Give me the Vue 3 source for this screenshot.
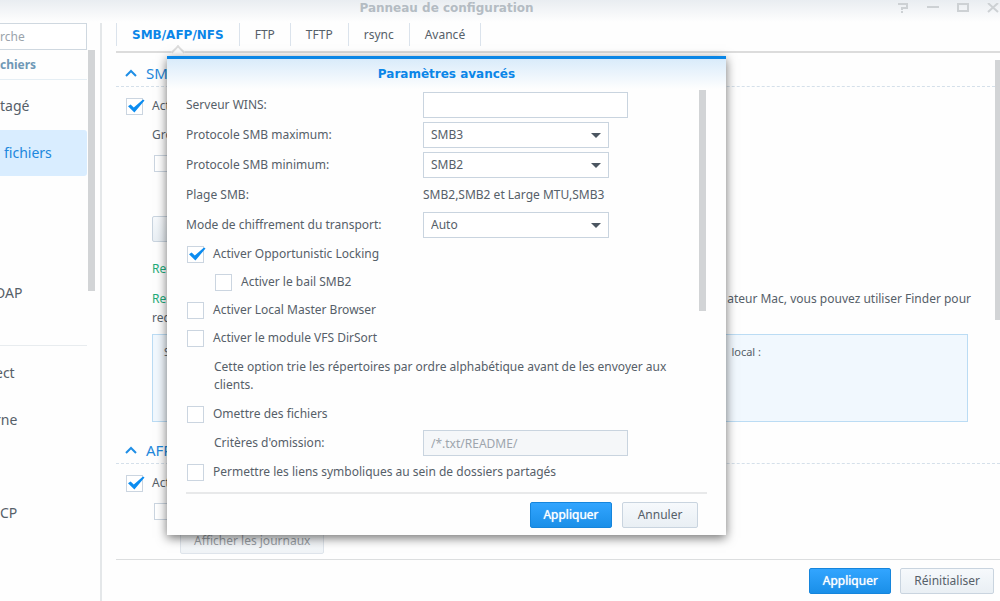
<script setup>
import { ref, h } from 'vue'

const tabs = ['SMB/AFP/NFS', 'FTP', 'TFTP', 'rsync', 'Avancé']
const current = ref('SMB/AFP/NFS')
const maxProtocol = ref('SMB3')
const minProtocol = ref('SMB2')
const transport = ref('Auto')
const wins = ref('')
const criteria = ref('/*.txt/README/')

const Tick = (props) =>
  h('span', { class: 'tick' }, [
    h('input', { type: 'checkbox', id: props.id, checked: props.on, 'aria-label': props.name }),
    h('svg', { viewBox: '0 0 19 17', 'aria-hidden': 'true' }, [
      h('path', { d: 'M2 8.2 4.6 6.6 7.8 9.4 17 1.6 18.5 2.6 8.4 14.4z' }),
    ]),
  ])
Tick.props = ['id', 'on', 'name']
</script>

<template>
  <div class="window">
    <header class="titlebar">
      <h1>Panneau de configuration</h1>
      <div class="controls">
        <button aria-label="Aide"><svg viewBox="0 0 12 10"><path d="M1 1H10V5H5V7M4 9H6" /></svg></button>
        <button aria-label="Réduire"><svg viewBox="0 0 12 10"><path d="M0 4H12" /></svg></button>
        <button aria-label="Agrandir"><svg viewBox="0 0 12 10"><path d="M1 0V8H11V0M0 1H12" /></svg></button>
        <button aria-label="Fermer"><svg viewBox="0 0 12 10"><path d="M1 0 11 9M11 0 1 9" /></svg></button>
      </div>
    </header>

    <div class="columns">
      <aside class="sidebar">
        <div class="nav">
          <input class="search" type="search" placeholder="rche" aria-label="Recherche" />
          <h2>chiers</h2>
          <nav>
            <a href="#" class="item">tagé</a>
            <a href="#" class="item active">fichiers</a>
            <div class="spacer"></div>
            <a href="#" class="item cut">DAP</a>
            <hr />
            <a href="#" class="item cut">ect</a>
            <a href="#" class="item cut">rne</a>
            <div class="spacer single"></div>
            <a href="#" class="item">CP</a>
          </nav>
        </div>
        <div class="side-scroll"></div>
      </aside>

      <main>
        <div class="tabs">
          <button v-for="tab in tabs" :key="tab" :class="{ on: tab === current }" @click="current = tab">{{ tab }}</button>
        </div>

        <div class="body">
          <section>
            <h3><svg viewBox="0 0 12 8"><path d="M1 7 6 2 11 7" /></svg>SMB</h3>
            <div class="row"><Tick id="smb" :on="true" /><label for="smb">Activer</label></div>
            <div class="row indent">Groupe</div>
            <div class="row indent box"><Tick name="Option SMB" /></div>
            <button class="btn stub" aria-label="Paramètres avancés"></button>
            <p class="note green">Remarque</p>
            <p class="note split"><span class="green">Remarque</span><span>ateur Mac, vous pouvez utiliser Finder pour</span></p>
            <p class="note last">recom</p>
            <div class="info"><span>Si</span><span>local :</span></div>
          </section>
          <section class="afp">
            <h3><svg viewBox="0 0 12 8"><path d="M1 7 6 2 11 7" /></svg>AFP</h3>
            <div class="row"><Tick id="afp" :on="true" /><label for="afp">Activer</label></div>
            <div class="row indent box"><Tick name="Option AFP" /></div>
            <button class="btn logs" disabled>Afficher les journaux</button>
          </section>
          <div class="main-scroll"></div>
        </div>

        <footer class="actions">
          <button class="btn primary">Appliquer</button>
          <button class="btn">Réinitialiser</button>
        </footer>
      </main>
    </div>

    <div class="dialog" role="dialog" aria-labelledby="dialog-title">
      <h2 id="dialog-title">Paramètres avancés</h2>
      <form @submit.prevent>
        <div class="field"><label for="wins">Serveur WINS:</label><input id="wins" v-model="wins" type="text" /></div>
        <div class="field">
          <label for="max">Protocole SMB maximum:</label>
          <span class="select"><select id="max" v-model="maxProtocol"><option>SMB3</option><option>SMB2</option></select></span>
        </div>
        <div class="field">
          <label for="min">Protocole SMB minimum:</label>
          <span class="select"><select id="min" v-model="minProtocol"><option>SMB2</option><option>SMB3</option></select></span>
        </div>
        <div class="field"><span>Plage SMB:</span><span>SMB2,SMB2 et Large MTU,SMB3</span></div>
        <div class="field">
          <label for="enc">Mode de chiffrement du transport:</label>
          <span class="select"><select id="enc" v-model="transport"><option>Auto</option></select></span>
        </div>
        <div class="check"><Tick id="lock" :on="true" /><label for="lock">Activer Opportunistic Locking</label></div>
        <div class="check sub"><Tick id="lease" /><label for="lease">Activer le bail SMB2</label></div>
        <div class="check"><Tick id="master" /><label for="master">Activer Local Master Browser</label></div>
        <div class="check"><Tick id="dirsort" /><label for="dirsort">Activer le module VFS DirSort</label></div>
        <p>Cette option trie les répertoires par ordre alphabétique avant de les envoyer aux clients.</p>
        <div class="check"><Tick id="omit" /><label for="omit">Omettre des fichiers</label></div>
        <div class="field"><label for="crit" class="inner">Critères d'omission:</label><input id="crit" v-model="criteria" type="text" disabled /></div>
        <div class="check"><Tick id="links" /><label for="links">Permettre les liens symboliques au sein de dossiers partagés</label></div>
        <div class="form-scroll"></div>
      </form>
      <footer>
        <button class="btn primary">Appliquer</button>
        <button class="btn">Annuler</button>
      </footer>
    </div>
  </div>
</template>

<style>
body {
  background: #fefefe;
  overflow: hidden;
}
.tick {
  position: relative;
  display: block;
  flex: none;
  width: 17px;
  height: 17px;
}
.tick input {
  appearance: none;
  display: block;
  box-sizing: border-box;
  width: 17px;
  height: 17px;
  margin: 0;
  border: 1px solid #cbd5e0;
  background: #fff;
}
.tick svg {
  position: absolute;
  left: 0;
  top: 0;
  width: 19px;
  height: 17px;
  fill: #0b8cf0;
  pointer-events: none;
  visibility: hidden;
}
.tick input:checked + svg {
  visibility: visible;
}
</style>

<style scoped>
.window {
  position: relative;
  display: flex;
  flex-direction: column;
  height: 100vh;
  overflow: hidden;
  background: linear-gradient(#e9edf1, #fefefe 22px);
  color: #566069;
  font: 12px/18px "Noto Sans", "DejaVu Sans", sans-serif;
}
button,
input,
select {
  font: inherit;
  color: inherit;
  box-sizing: border-box;
}
h1, h2, h3, p {
  margin: 0;
}
.titlebar {
  flex: none;
  display: grid;
  grid-template-columns: 1fr auto 1fr;
  height: 23px;
}
h1 {
  grid-column: 2;
  margin-right: 107px;
  font: bold 12px/16px "DejaVu Sans", sans-serif;
  color: #b4bcc3;
}
.controls {
  display: flex;
  justify-content: flex-end;
  align-items: flex-start;
  gap: 18px;
  padding: 3px 1px;
}
.controls button {
  display: block;
  padding: 0;
  border: 0;
  background: none;
}
.controls svg {
  display: block;
  width: 12px;
  height: 10px;
  fill: none;
  stroke: #cdd1d4;
  stroke-width: 2;
}
.columns {
  flex: 1;
  min-height: 0;
  display: flex;
}
.sidebar {
  flex: none;
  display: flex;
  gap: 1px;
  width: 100px;
  border-right: 2px solid #e4e7e9;
}
.nav {
  width: 87px;
}
.search {
  appearance: none;
  display: block;
  width: 87px;
  height: 27px;
  padding: 0;
  border: 1px solid #cfd8e0;
  border-left: 0;
  background: #fff;
}
.search::placeholder {
  color: #9aa3ab;
}
.nav h2 {
  font-size: 12px;
  line-height: 28px;
  padding-top: 1px;
  color: #6f98b6;
  border-bottom: 1px solid #e5eef4;
}
nav {
  padding-top: 3px;
  font-size: 14px;
}
.item {
  display: block;
  margin-bottom: 1px;
  line-height: 46px;
  color: #566069;
  text-decoration: none;
}
.item.active {
  padding-left: 4px;
  background: #d9edff;
  border-radius: 0 3px 3px 0;
  color: #2087dd;
}
.item.cut {
  margin-left: -5px;
}
.spacer {
  height: 93px;
}
.spacer.single {
  height: 46px;
}
nav hr {
  margin: 29px 0 4px;
  border: 0;
  border-top: 1px solid #e8ecef;
}
.side-scroll {
  width: 7px;
  height: 241px;
  margin-top: 27px;
  background: #d2d4d6;
}
main {
  flex: 1;
  min-width: 0;
  display: flex;
  flex-direction: column;
  padding-left: 14px;
}
.tabs {
  flex: none;
  display: flex;
  align-items: flex-start;
  height: 28px;
  border-bottom: 2px solid #dcdcdc;
}
.tabs button {
  position: relative;
  height: 23px;
  padding: 0 15px;
  border: 0;
  border-right: 1px solid #dbe3ec;
  background: none;
}
.tabs button:first-child {
  border-left: 1px solid #dbe3ec;
}
.tabs .on {
  font: bold 12px/22px "DejaVu Sans", sans-serif;
  color: #0b86e8;
}
.tabs .on::after {
  content: "";
  position: absolute;
  left: 50%;
  top: 24px;
  width: 8px;
  height: 8px;
  margin-left: -5px;
  background: #fefefe;
  border: solid #dcdcdc;
  border-width: 2px 0 0 2px;
  transform: rotate(45deg);
}
.body {
  position: relative;
  flex: 1;
  min-height: 0;
  overflow: hidden;
  padding-top: 6px;
}
h3 {
  display: flex;
  align-items: center;
  gap: 9px;
  height: 27px;
  padding-left: 9px;
  border-bottom: 1px dashed #d5e0ea;
  font-size: 15px;
  font-weight: normal;
  color: #1f88dc;
}
h3 svg {
  width: 12px;
  height: 8px;
  fill: none;
  stroke: #1f8ee6;
  stroke-width: 2;
}
section .row {
  display: flex;
  align-items: center;
  gap: 9px;
  height: 28px;
  padding-left: 10px;
}
section h3 + .row {
  padding-top: 5px;
}
section .indent {
  height: 29px;
  padding-left: 36px;
}
section .box {
  padding-left: 38px;
}
.btn {
  box-sizing: border-box;
  height: 26px;
  padding: 0 13px;
  border: 1px solid #c9d4df;
  border-radius: 2px;
  background: linear-gradient(#f6f9fc, #e9eff4);
}
.primary {
  min-width: 82px;
  padding: 0 12px;
  border-color: #1585dc;
  background: linear-gradient(#32a5ff, #1a8fe8);
  color: #fff;
  text-shadow: 0 0 1px #fff;
}
.stub {
  display: block;
  width: 120px;
  margin: 38px 0 0 36px;
}
.note {
  padding: 18px 29px 0 36px;
}
.note.split {
  display: flex;
  justify-content: space-between;
  padding-top: 12px;
}
.note.last {
  padding-top: 1px;
}
.green {
  color: #1fab78;
}
.info {
  display: flex;
  justify-content: space-between;
  box-sizing: border-box;
  height: 88px;
  margin: 7px 32px 0 36px;
  padding: 8px 206px 0 11px;
  border: 1px solid #bbdcf4;
  background: #f1f8fe;
  font-size: 11px;
}
.afp {
  padding-top: 14px;
}
.logs {
  margin: 2px 0 0 64px;
  opacity: 0.6;
}
.main-scroll {
  position: absolute;
  right: 0;
  top: 7px;
  width: 5px;
  height: 260px;
  background: #d2d4d6;
}
.actions {
  flex: none;
  display: flex;
  justify-content: flex-end;
  gap: 9px;
  padding: 8px 6px 7px;
  border-top: 1px solid #dcdedf;
}
.dialog {
  position: absolute;
  left: 167px;
  right: 274px;
  top: 56px;
  border-top: 3px solid #0a86e6;
  background: linear-gradient(#d9ebfa, #fefefe 30px);
  box-shadow: 0 3px 10px rgba(0, 0, 0, 0.55);
}
.dialog h2 {
  font: bold 12px/31px "DejaVu Sans", sans-serif;
  text-align: center;
  color: #0b86e8;
}
form {
  position: relative;
  padding-left: 19px;
}
.field {
  display: grid;
  grid-template-columns: 237px 1fr;
  align-items: center;
  height: 30px;
}
.field .inner {
  padding-left: 28px;
}
.field input {
  width: 205px;
  height: 26px;
  padding: 0 7px;
  border: 1px solid #c9d4df;
  background: #fff;
}
.field input:disabled {
  background: #f5f7f9;
  color: #9da5ad;
}
.select {
  position: relative;
  width: 186px;
  height: 26px;
}
select {
  appearance: none;
  display: block;
  width: 100%;
  height: 26px;
  padding: 0 7px;
  border: 1px solid #c9d4df;
  border-radius: 0;
  background: #fff;
}
.select::after {
  content: "";
  position: absolute;
  right: 8px;
  top: 11px;
  border: 5px solid transparent;
  border-top-color: #4b5661;
  border-bottom: 0;
  pointer-events: none;
}
.check {
  display: flex;
  align-items: center;
  gap: 9px;
  height: 28px;
  padding-left: 1px;
}
.check.sub {
  padding-left: 29px;
}
form p {
  padding: 6px 40px 6px 28px;
}
.form-scroll {
  position: absolute;
  right: 20px;
  top: 0;
  width: 7px;
  height: 221px;
  background: #d2d4d6;
}
.dialog footer {
  display: flex;
  justify-content: flex-end;
  gap: 10px;
  margin: 6px 19px 0;
  padding: 8px 9px 7px;
  border-top: 2px solid #e8e9ea;
}
.dialog footer .btn:last-child {
  min-width: 76px;
}
</style>
